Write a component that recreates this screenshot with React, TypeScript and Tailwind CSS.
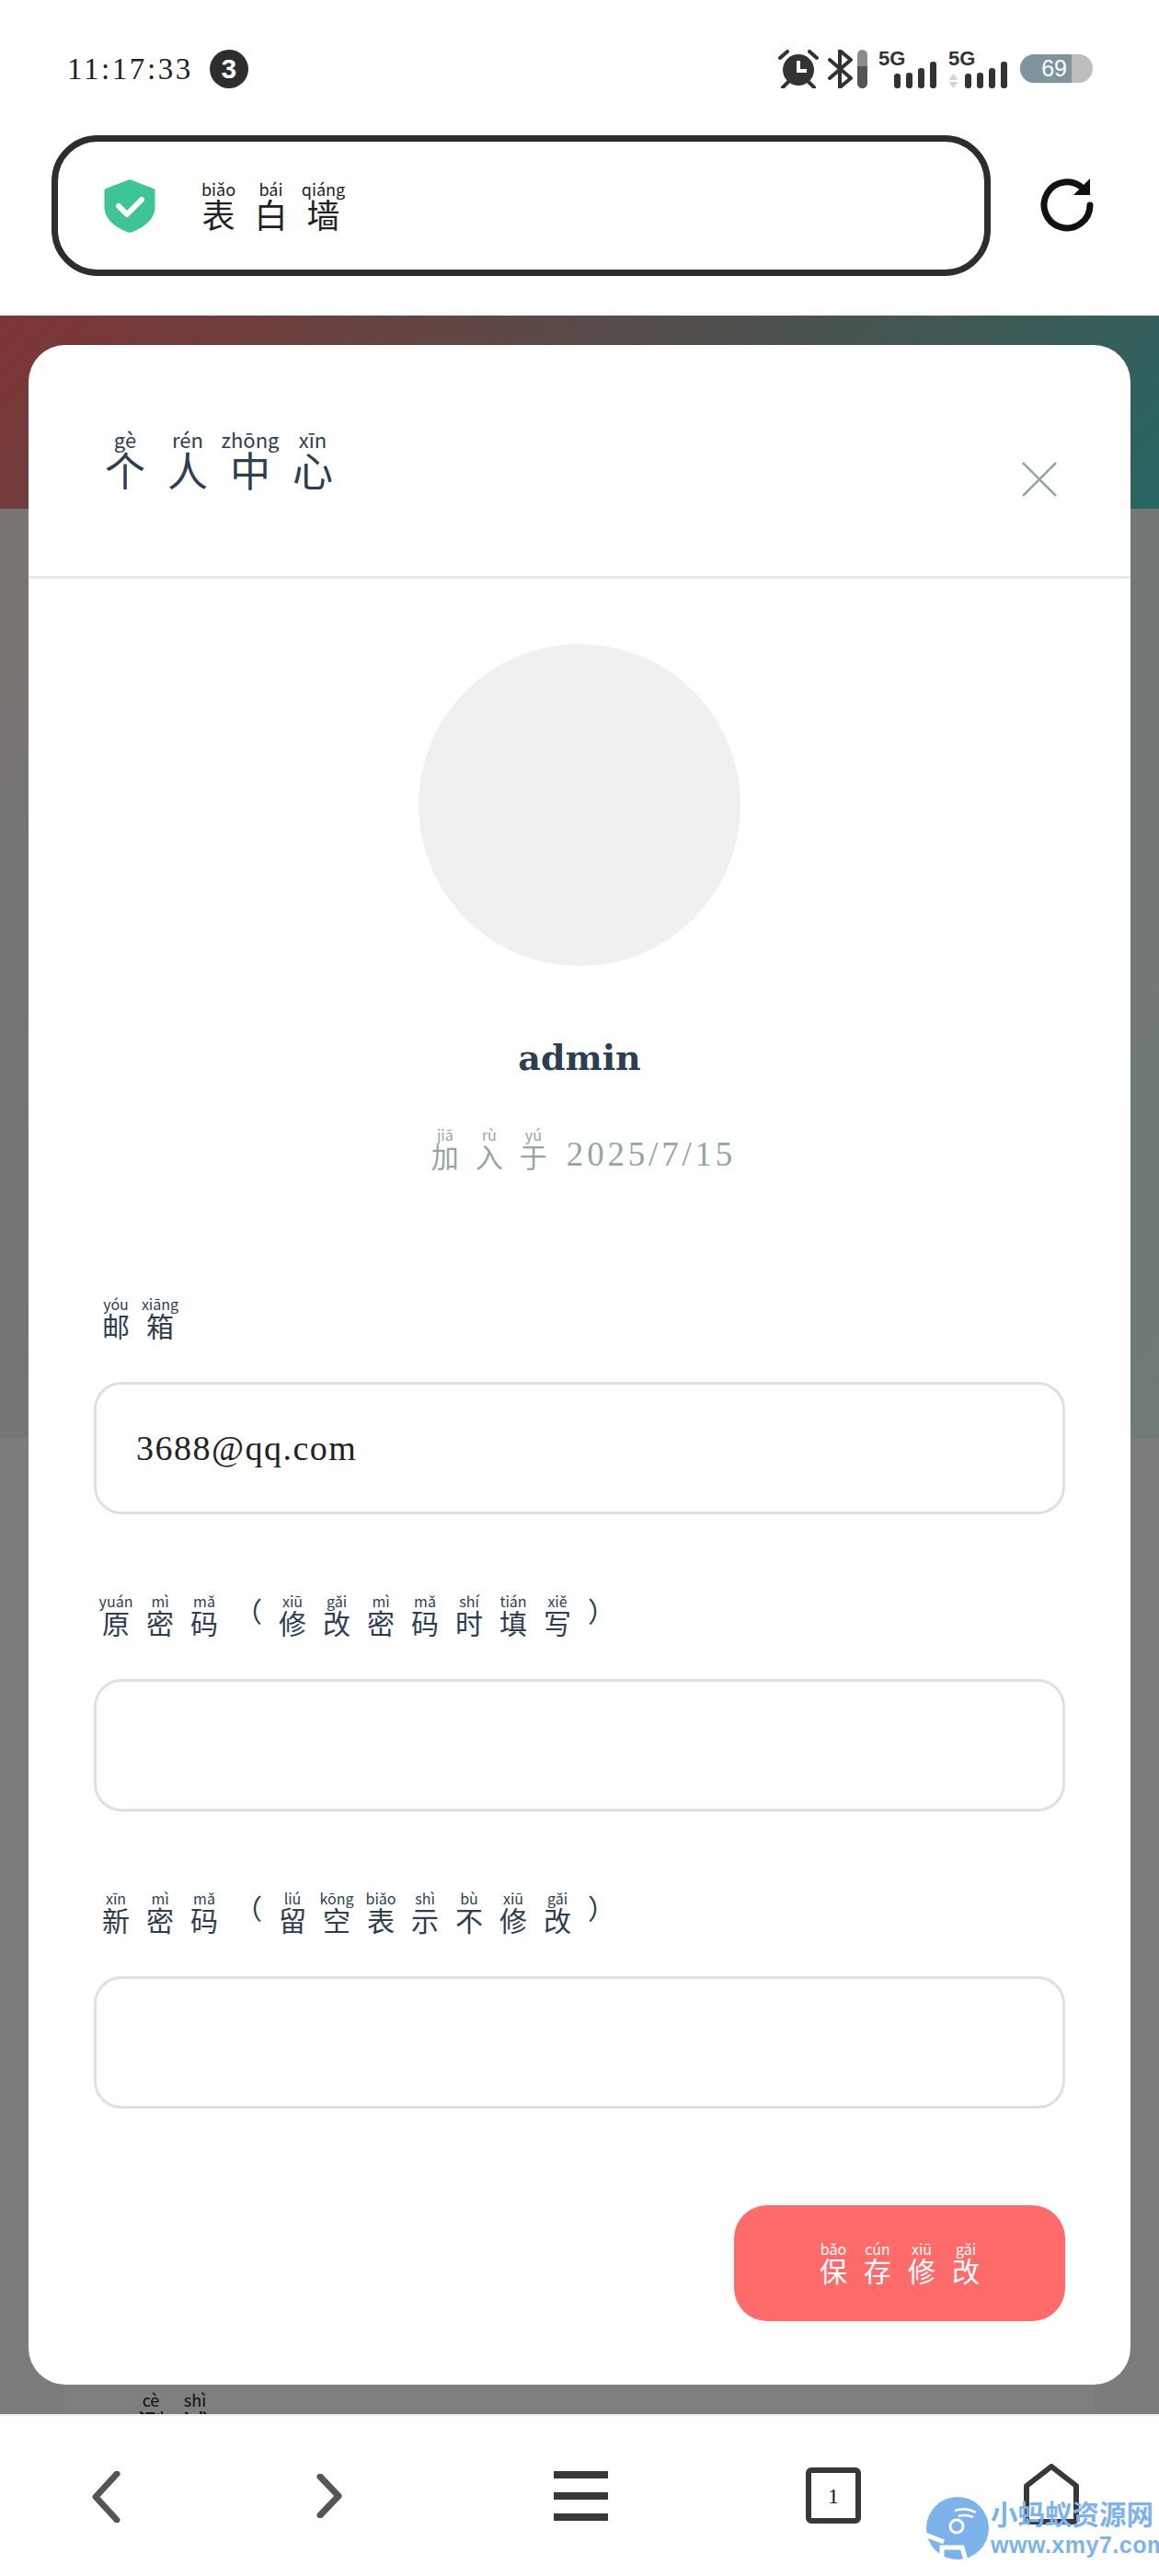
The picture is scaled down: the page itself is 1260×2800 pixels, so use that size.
import type { ReactNode } from "react";

const CJK = "font-['Noto_Sans_CJK_SC','Noto_Sans',sans-serif]";

type PinyinProps = {
  items: [string, string][];
  pitch: string;
  className?: string;
};

function Pinyin({ items, pitch, className = "" }: PinyinProps) {
  return (
    <span className={`flex ${CJK} ${className}`}>
      {items.map(([char, sound], i) => (
        <ruby key={i} className={`${pitch} shrink-0 text-center`}>
          {char}
          <rt>{sound}</rt>
        </ruby>
      ))}
    </span>
  );
}

function Field({ label, value }: { label: ReactNode; value?: string }) {
  return (
    <div className="flex flex-col">
      <div className="flex h-[75px] items-start text-[30px] leading-[36px] text-[#2c3e50] [&_rt]:text-[16px] [&_rt]:leading-[17px]">
        {label}
      </div>
      <div className="mt-[18px] flex h-[144px] items-center rounded-[30px] border-[3px] border-[#e0e0e0] bg-white px-[43px] font-['Liberation_Serif',serif] text-[38px] tracking-[1.5px] text-[#222]">
        {value}
      </div>
    </div>
  );
}

function Bars() {
  return (
    <span className="flex items-end gap-[6px]">
      <span className="h-[16px] w-[7px] rounded-[3px] bg-[#333]" />
      <span className="h-[17px] w-[7px] rounded-[3px] bg-[#333]" />
      <span className="h-[22px] w-[7px] rounded-[3px] bg-[#333]" />
      <span className="h-[29px] w-[7px] rounded-[3px] bg-[#333]" />
    </span>
  );
}

function StatusBar() {
  return (
    <div className="flex h-[147px] items-start justify-between pl-[73px] pr-[72px] pt-[54px]">
      <div className="flex h-[42px] items-center gap-[18px]">
        <span className="font-['Liberation_Serif',serif] text-[33px] leading-none tracking-[2.6px] text-[#222]">11:17:33</span>
        <span className="flex size-[42px] items-center justify-center rounded-full bg-[#2d2d2d] font-['Liberation_Sans',sans-serif] text-[30px] font-bold leading-none text-white">3</span>
      </div>
      <div className="flex h-[42px] items-start">
        <svg width="44" height="42" viewBox="0 0 44 42" className="mr-[10px]">
          <circle cx="22" cy="22" r="17" fill="#333" />
          <path d="M22 12v11h9" fill="none" stroke="#fff" strokeWidth="4" />
          <path d="M2 9l8-7M42 9l-8-7M5 41l6-6M39 41l-6-6" stroke="#333" strokeWidth="4" strokeLinecap="round" />
        </svg>
        <svg width="28" height="42" viewBox="0 0 28 42" className="mr-[4px]">
          <path d="M2 11l23 20-12 10V1l12 10L2 31" fill="none" stroke="#333" strokeWidth="4" strokeLinejoin="round" strokeLinecap="round" />
        </svg>
        <span className="mr-[12px] flex h-[42px] w-[11px] flex-col overflow-hidden rounded-full">
          <span className="h-[18px] bg-[#8c8c8c]" />
          <span className="flex-1 bg-[#555]" />
        </span>
        <div className="relative mr-[13px] h-[42px] w-[63px]">
          <span className="absolute left-0 top-0 font-['Liberation_Sans',sans-serif] text-[22px] font-bold leading-[20px] text-[#333]">5G</span>
          <span className="absolute bottom-0 right-0"><Bars /></span>
        </div>
        <div className="relative mr-[14px] h-[42px] w-[64px]">
          <span className="absolute left-0 top-0 font-['Liberation_Sans',sans-serif] text-[22px] font-bold leading-[20px] text-[#333]">5G</span>
          <svg width="11" height="16" viewBox="0 0 11 16" className="absolute bottom-0 left-0">
            <path d="M5.5 0l5 7H.5zM5.5 16l5-7H.5z" fill="#d4d4d4" />
          </svg>
          <span className="absolute bottom-0 right-0"><Bars /></span>
        </div>
        <div className="mt-[5px] flex h-[31px] w-[79px] overflow-hidden rounded-full bg-[#bdbdbd]">
          <span className="flex w-[56px] items-center justify-end bg-[#7f949c] pr-[5px] font-['Liberation_Sans',sans-serif] text-[25px] leading-none text-white">69</span>
        </div>
      </div>
    </div>
  );
}

function AddressBar() {
  return (
    <div className="flex h-[196px] items-start pl-[56px] pr-[56px]">
      <div className="flex h-[153px] w-[1021px] items-center rounded-[50px] border-[7px] border-[#2d2d2d] pl-[50px]">
        <svg width="56" height="60" viewBox="0 0 56 60" className="shrink-0">
          <path d="M28 1l26 10c1 .4 1.500 1 1.500 2v18c0 13-12 23-27.500 28C12.500 54 .5 44 .5 31V13c0-1 .5-1.600 1.500-2z" fill="#3fc495" />
          <path d="M16 30l9 9 16-16" fill="none" stroke="#fff" strokeWidth="6" strokeLinecap="round" strokeLinejoin="round" />
        </svg>
        <Pinyin
          className="ml-[40px] text-[36px] leading-[36px] text-[#222] [&_rt]:text-[18px] [&_rt]:leading-[20px]"
          pitch="w-[57px]"
          items={[["表", "biǎo"], ["白", "bái"], ["墙", "qiáng"]]}
        />
      </div>
      <svg width="64" height="64" viewBox="0 0 64 64" className="ml-[51px] mt-[44px] shrink-0">
        <path d="M57 32a25 25 0 1 1-7-17.500" fill="none" stroke="#111" strokeWidth="7" strokeLinecap="round" />
        <path d="M57 3v18H39z" fill="#111" />
      </svg>
    </div>
  );
}

function Modal() {
  return (
    <div className="absolute left-[31px] right-[31px] top-[32px] h-[2217px] rounded-[40px] bg-white">
      <div className="relative h-[254px] border-b-[3px] border-[#e8e8e8]">
        <Pinyin
          className="absolute left-[71px] top-[92px] text-[44px] leading-[46px] text-[#2c3e50] [&_rt]:text-[22px] [&_rt]:leading-[24px]"
          pitch="w-[68px]"
          items={[["个", "gè"], ["人", "rén"], ["中", "zhōng"], ["心", "xīn"]]}
        />
        <svg width="38" height="38" viewBox="0 0 38 38" className="absolute right-[80px] top-[127px]">
          <path d="M1 1l36 36M37 1L1 37" stroke="#95a5a6" strokeWidth="2.500" />
        </svg>
      </div>
      <div className="flex flex-col items-center">
        <div className="mt-[71px] size-[350px] rounded-full bg-[#f0f0f0]" />
        <div className="mt-[75px] font-['DejaVu_Serif',serif] text-[38px] font-bold leading-[50px] text-[#2c3e50]">admin</div>
        <div className="mt-[50px] flex items-end text-[#95a5a6]">
          <Pinyin
            className="text-[30px] leading-[36px] [&_rt]:text-[16px] [&_rt]:leading-[17px]"
            pitch="w-[48px]"
            items={[["加", "jiā"], ["入", "rù"], ["于", "yú"]]}
          />
          <span className="ml-[12px] font-['Liberation_Serif',serif] text-[37px] leading-[38px] tracking-[3.8px]">2025/7/15</span>
        </div>
      </div>
      <div className="mt-[135px] flex flex-col gap-[86px] px-[71px]">
        <Field
          label={<Pinyin pitch="w-[48px]" items={[["邮", "yóu"], ["箱", "xiāng"]]} />}
          value="3688@qq.com"
        />
        <Field
          label={
            <Pinyin
              pitch="w-[48px]"
              items={[["原", "yuán"], ["密", "mì"], ["码", "mǎ"], ["（", ""], ["修", "xiū"], ["改", "gǎi"], ["密", "mì"], ["码", "mǎ"], ["时", "shí"], ["填", "tián"], ["写", "xiě"], ["）", ""]]}
            />
          }
        />
        <Field
          label={
            <Pinyin
              pitch="w-[48px]"
              items={[["新", "xīn"], ["密", "mì"], ["码", "mǎ"], ["（", ""], ["留", "liú"], ["空", "kōng"], ["表", "biǎo"], ["示", "shì"], ["不", "bù"], ["修", "xiū"], ["改", "gǎi"], ["）", ""]]}
            />
          }
        />
      </div>
      <div className="mt-[105px] flex justify-end px-[71px]">
        <button type="button" className="flex h-[126px] w-[360px] items-center justify-center rounded-[36px] bg-[#ff6b6b] text-white">
          <Pinyin
            className="text-[30px] leading-[34px] [&_rt]:text-[16px] [&_rt]:leading-[17px]"
            pitch="w-[48px]"
            items={[["保", "bǎo"], ["存", "cún"], ["修", "xiū"], ["改", "gǎi"]]}
          />
        </button>
      </div>
    </div>
  );
}

function Watermark() {
  return (
    <div className="absolute left-[1006px] top-[2713px] flex items-start">
      <svg width="70" height="70" viewBox="0 0 70 70" className="shrink-0">
        <circle cx="35" cy="35" r="34" fill="#7db3ea" />
        <path d="M32 16c8-3 16-2 23 2M36 22c6-2 11-1 16 1" fill="none" stroke="#fff" strokeWidth="2.500" />
        <circle cx="34" cy="33" r="7" fill="none" stroke="#fff" strokeWidth="3" />
        <path d="M0 42l20 8M18 68V56h22l4 14" fill="none" stroke="#fff" strokeWidth="5" />
      </svg>
      <div className="ml-[1px] flex flex-col">
        <span className={`${CJK} text-[29.500px] font-bold leading-[36px] text-[#7db3ea]`}>小蚂蚁资源网</span>
        <span className="mt-[4px] font-['Liberation_Sans',sans-serif] text-[25px] font-bold leading-[26px] tracking-[0.5px] text-[#7db3ea]">www.xmy7.com</span>
      </div>
    </div>
  );
}

function BottomNav() {
  return (
    <div className="flex h-[176px] shrink-0 items-start border-t-2 border-[#eeeeee] bg-white pt-[52px]">
      <svg width="32" height="56" viewBox="0 0 32 56" className="ml-[99px] mt-[8px]">
        <path d="M28 3L5 28l23 25" fill="none" stroke="#555" strokeWidth="7" strokeLinecap="round" strokeLinejoin="round" />
      </svg>
      <svg width="28" height="48" viewBox="0 0 28 48" className="ml-[213px] mt-[11px]">
        <path d="M4 3l20 21L4 45" fill="none" stroke="#555" strokeWidth="7" strokeLinecap="round" strokeLinejoin="round" />
      </svg>
      <div className="ml-[230px] mt-[8px] flex h-[54px] w-[59px] flex-col justify-between">
        <span className="h-[8px] bg-[#383838]" />
        <span className="h-[8px] bg-[#383838]" />
        <span className="h-[8px] bg-[#383838]" />
      </div>
      <div className="ml-[215px] mt-[4px] flex h-[61px] w-[60px] items-center justify-center rounded-[6px] border-[6px] border-[#383838] font-['Liberation_Serif',serif] text-[24px] leading-none text-[#222]">1</div>
      <svg width="60" height="66" viewBox="0 0 60 66" className="ml-[177px]">
        <path d="M30 3l27 21v36a3 3 0 0 1-3 3H6a3 3 0 0 1-3-3V24z" fill="none" stroke="#383838" strokeWidth="6" strokeLinejoin="round" />
      </svg>
    </div>
  );
}

export default function App() {
  return (
    <div className="relative flex h-[2800px] w-[1260px] flex-col overflow-hidden bg-white">
      <StatusBar />
      <AddressBar />
      <main className="relative flex-1 overflow-hidden bg-[#f9f9f9]">
        <div className="h-[210px] bg-[linear-gradient(135deg,#ff6b6b,#4ecdc4)]" />
        <div className="h-[1010px] bg-[linear-gradient(135deg,#f0e8e4,#e0f4f2)]" />
        <div className="relative mx-[70px] h-[1100px] bg-white">
          <Pinyin
            className="absolute left-[70px] top-[1037px] text-[30px] leading-[30px] [&_rt]:text-[18px] [&_rt]:leading-[16px] text-[#222]"
            pitch="w-[48px]"
            items={[["测", "cè"], ["试", "shì"]]}
          />
        </div>
        <div className="absolute inset-0 bg-black/50" />
        <Modal />
      </main>
      <BottomNav />
      <Watermark />
    </div>
  );
}
